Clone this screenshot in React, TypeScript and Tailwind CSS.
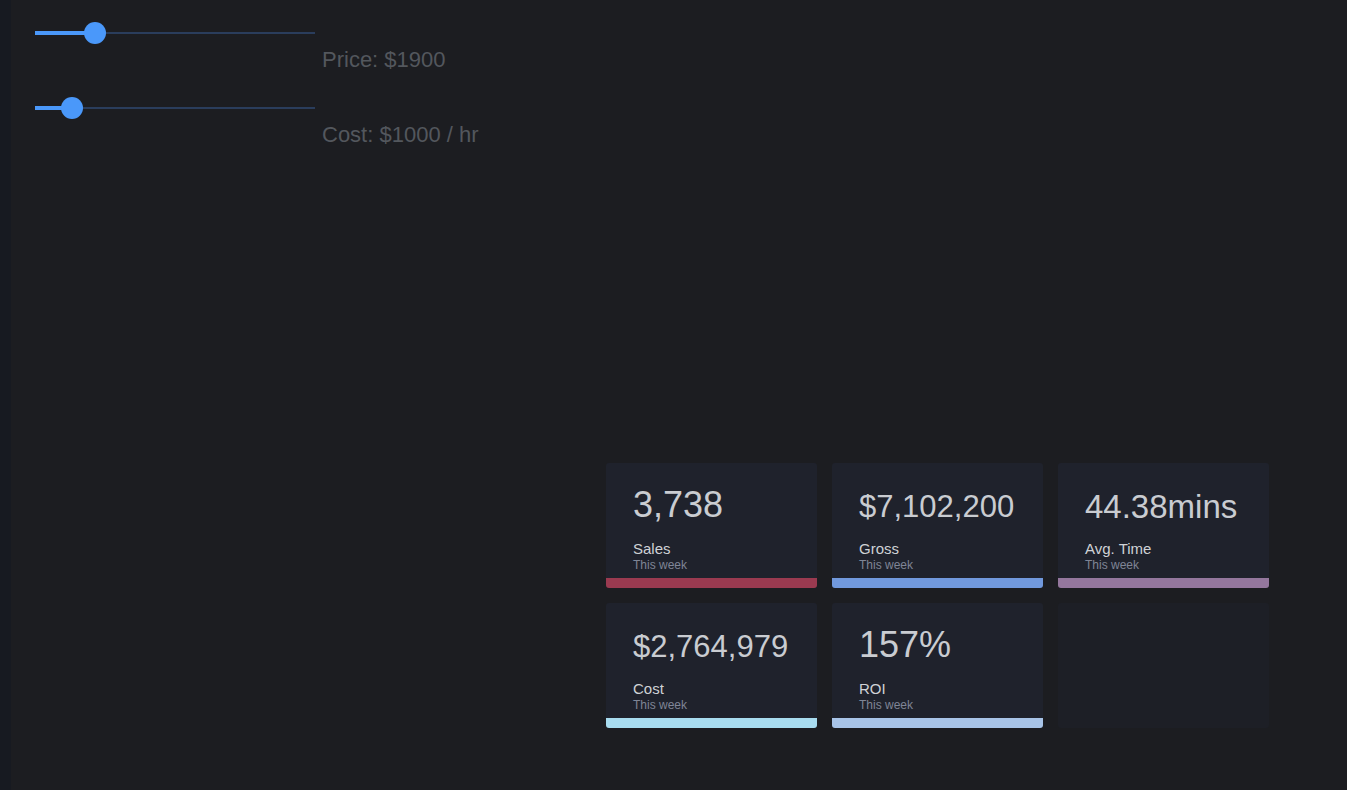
import React from "react";

function Slider({ fillClass, thumbClass, label }: { fillClass: string; thumbClass: string; label: string }) {
  return (
    <div className="flex flex-col">
      <div className="relative w-[280px] h-[22px]">
        <div className="absolute left-0 right-0 top-[10px] h-[2px] bg-[#2a3d5c]" />
        <div className={`absolute left-0 top-[9px] h-[4px] bg-[#4a98fa] ${fillClass}`} />
        <div className={`absolute top-0 w-[22px] h-[22px] rounded-full bg-[#4a98fa] ${thumbClass}`} />
      </div>
      <div className="mt-[3px] ml-[287px] text-[22px] leading-[26px] text-[#53575d] whitespace-nowrap">{label}</div>
    </div>
  );
}

type Card = { value: string; valueClass: string; label: string; bar: string };

const cards: Card[] = [
  { value: "3,738", valueClass: "text-[36px] mt-[24px]", label: "Sales", bar: "bg-[#9a3a50]" },
  { value: "$7,102,200", valueClass: "text-[31px] mt-[28px]", label: "Gross", bar: "bg-[#7199dd]" },
  { value: "44.38mins", valueClass: "text-[33px] mt-[27px]", label: "Avg. Time", bar: "bg-[#94779d]" },
  { value: "$2,764,979", valueClass: "text-[31px] mt-[28px]", label: "Cost", bar: "bg-[#a8dcf0]" },
  { value: "157%", valueClass: "text-[36px] mt-[24px]", label: "ROI", bar: "bg-[#a8c4e8]" },
];

function StatCard({ c }: { c: Card }) {
  return (
    <div className="flex flex-col h-[125px] rounded-[3px] overflow-hidden bg-[#1f222c]">
      <div className="flex-1 flex flex-col px-[27px] pb-[7px]">
        <div className={`leading-none text-[#c9ccd1] whitespace-nowrap ${c.valueClass}`}>{c.value}</div>
        <div className="mt-auto">
          <div className="text-[15px] leading-[15px] text-[#cfd2d6]">{c.label}</div>
          <div className="mt-[3px] text-[12px] leading-[12px] text-[#7f8596]">This week</div>
        </div>
      </div>
      <div className={`h-[10px] ${c.bar}`} />
    </div>
  );
}

export default function App() {
  return (
    <div className="flex w-[1347px] h-[790px] overflow-hidden bg-[#1c1d21]" style={{ fontFamily: '"Liberation Sans", Arial, sans-serif' }}>
      <div className="w-[11px] shrink-0 bg-[#171a21]" />
      <div className="flex-1 flex flex-col">
        <div className="flex flex-col gap-[24px] pt-[22px] pl-[24px]">
          <Slider fillClass="w-[60px]" thumbClass="left-[49px]" label="Price: $1900" />
          <Slider fillClass="w-[37px]" thumbClass="left-[26px]" label="Cost: $1000 / hr" />
        </div>
        <div className="mt-[315px] pl-[595px]">
          <div className="grid grid-cols-[211px_211px_211px] gap-[15px]">
            {cards.map((c) => (
              <StatCard key={c.label} c={c} />
            ))}
            <div className="h-[125px] rounded-[3px] bg-[#1d1f26]" />
          </div>
        </div>
      </div>
    </div>
  );
}
